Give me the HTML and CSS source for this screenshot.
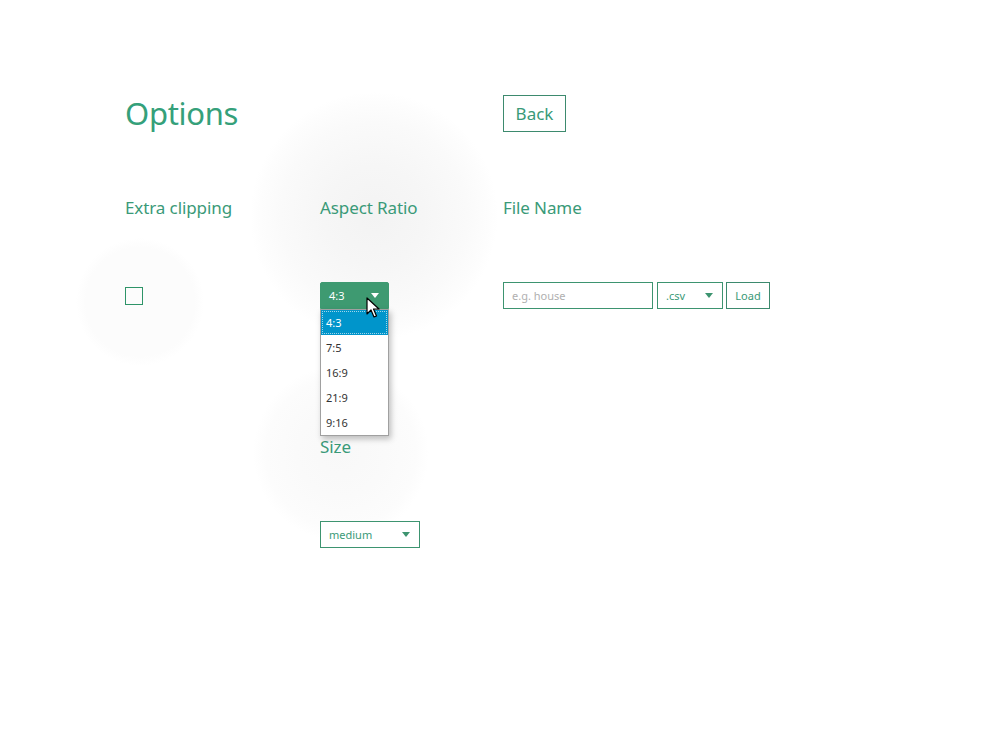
FILE: index.html
```html
<!DOCTYPE html>
<html>
<head>
<meta charset="utf-8">
<link rel="stylesheet" href="styles.css">
</head>
<body>
<div class="ripple r1"></div>
<div class="ripple r2"></div>
<div class="ripple r3"></div>
<main class="page">
  <header class="top">
    <h1 class="title">Options</h1>
    <button class="btn back">Back</button>
  </header>
  <section class="grid">
    <div class="label">Extra clipping</div>
    <div class="label">Aspect Ratio</div>
    <div class="label">File Name</div>

    <div class="cell"><span class="checkbox"></span></div>
    <div class="cell">
      <div class="select-wrap">
        <div class="select open"><span>4:3</span><span class="caret white"></span></div>
        <ul class="list">
          <li class="active">4:3</li>
          <li>7:5</li>
          <li>16:9</li>
          <li>21:9</li>
          <li>9:16</li>
        </ul>
        <svg class="cursor" width="14" height="22" viewBox="0 0 14 22"><path d="M1 1 L1 17 L5 13 L8 20 L10.5 19 L7.5 12 L13 12 Z" fill="#fff" stroke="#000" stroke-width="1.2" stroke-linejoin="round"/></svg>
      </div>
    </div>
    <div class="cell file">
      <input class="input" placeholder="e.g. house">
      <div class="select ext"><span>.csv</span><span class="caret"></span></div>
      <button class="btn load">Load</button>
    </div>

    <div></div>
    <div class="size">
      <div class="label">Size</div>
      <div class="select sizesel"><span>medium</span><span class="caret"></span></div>
    </div>
    <div></div>
  </section>
</main>
</body>
</html>
```
FILE: styles.css
```css
html, body { margin: 0; padding: 0; background: #fff; }
body {
  font-family: "Noto Sans", "Open Sans", sans-serif;
  color: #3a9a78;
  position: relative;
  width: 1000px;
  height: 750px;
  overflow: hidden;
}
.ripple {
  position: absolute;
  border-radius: 50%;
  z-index: 0;
}
.r1 { left: 250px; top: 92px; width: 248px; height: 248px;
  background: radial-gradient(circle closest-side, #f3f3f3 0%, #f6f6f6 40%, #fafafa 75%, #fdfdfd 92%, rgba(255,255,255,0) 100%); }
.r2 { left: 76px; top: 238px; width: 128px; height: 128px;
  background: radial-gradient(circle closest-side, #fcfcfc 0%, #fcfcfc 85%, rgba(255,255,255,0) 100%); }
.r3 { left: 253px; top: 365px; width: 176px; height: 176px;
  background: radial-gradient(circle closest-side, #f8f8f8 0%, #fafafa 50%, #fcfcfc 85%, rgba(255,255,255,0) 100%); }
.page { position: relative; z-index: 1; padding: 95px 0 0 125px; }
.top { display: flex; align-items: center; }
.title {
  margin: 0; width: 378px;
  font-size: 31px; font-weight: 400; line-height: 37px;
  color: #35a07a; letter-spacing: -0.3px;
}
.btn {
  font-family: inherit;
  background: #fff;
  border: 1px solid #3d8a6e;
  color: #3a9a78;
  cursor: pointer;
  padding: 0;
}
.back { width: 63px; height: 37px; font-size: 17px; }
.grid {
  display: grid;
  grid-template-columns: 195px 183px auto;
  margin-top: 64px;
  row-gap: 62px;
  align-items: start;
}
.label { font-size: 17px; line-height: 24px; color: #3a9a78; letter-spacing: -0.1px; }
.cell { height: 27px; display: flex; align-items: center; }
.checkbox {
  display: block; width: 16px; height: 16px;
  border: 1px solid #2e9468; margin-top: 1px;
}
.select-wrap { position: relative; }
.select {
  box-sizing: border-box;
  display: flex; align-items: center; justify-content: space-between;
  height: 27px; border: 1px solid #3d9470; background: #fff;
  font-size: 11px; color: #3a9a78; padding: 0 9px 0 8px;
}
.select.open { width: 69px; background: #3e9a71; color: #fff; border-color: #3e9a71; border-radius: 2px 2px 0 0; }
.caret {
  width: 0; height: 0;
  border-left: 4px solid transparent; border-right: 4px solid transparent;
  border-top: 5px solid #3d9470;
}
.caret.white { border-top-color: #fff; }
.list {
  position: absolute; left: 0; top: 27px;
  box-sizing: border-box;
  width: 69px; margin: 0; padding: 0;
  list-style: none; background: #fff;
  border: 1px solid #a0a0a0;
  box-shadow: 2px 3px 6px rgba(0,0,0,0.25);
  z-index: 5;
}
.list li {
  height: 25px; line-height: 25px;
  font-size: 11px; color: #333; padding-left: 5px;
  box-sizing: border-box;
}
.list li.active {
  background: #0095cb; color: #fff;
  outline: 1px dotted #9fd6ea; outline-offset: -2px;
}
.cursor { position: absolute; left: 46px; top: 15px; z-index: 6; }
.file { gap: 4px; }
.input {
  box-sizing: border-box; width: 150px; height: 27px;
  border: 1px solid #3d9470; font-family: inherit; font-size: 11px;
  padding: 0 8px; color: #333; outline: none;
}
.input::placeholder { color: #b0b0b0; }
.ext { width: 66px; }
.load { height: 27px; width: 44px; font-size: 11px; margin-left: -1px; }
.size { margin-top: 64px; }
.sizesel { width: 100px; margin-top: 62px; }
```
